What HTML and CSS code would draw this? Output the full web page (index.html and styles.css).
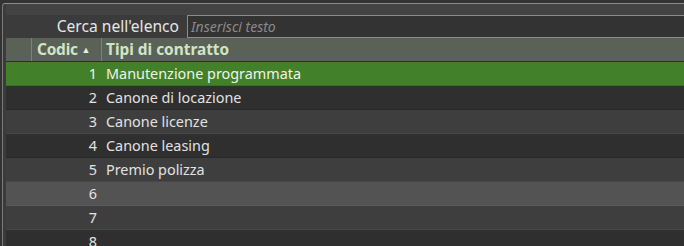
FILE: index.html
```html
<!DOCTYPE html>
<html lang="it">

<head>
  <meta charset="UTF-8" />
  <title>Tipi di contratto</title>
  <link rel="stylesheet" href="styles.css">
</head>

<body>

  <div class="panel">
    <div class="top-band"></div>

    <div class="search-row">
      <label class="search-label" for="search">Cerca nell'elenco</label>
      <input class="search-input" id="search" type="text" placeholder="Inserisci testo" />
    </div>

    <div class="grid">
      <div class="grid-row head">
        <div class="cell rowhead"></div>
        <div class="cell code">Codic <span class="sort">&#9650;</span></div>
        <div class="cell name">Tipi di contratto</div>
      </div>
      <div class="grid-row selected">
        <div class="cell rowhead"></div>
        <div class="cell code">1</div>
        <div class="cell name">Manutenzione programmata</div>
      </div>
      <div class="grid-row even">
        <div class="cell rowhead"></div>
        <div class="cell code">2</div>
        <div class="cell name">Canone di locazione</div>
      </div>
      <div class="grid-row odd">
        <div class="cell rowhead"></div>
        <div class="cell code">3</div>
        <div class="cell name">Canone licenze</div>
      </div>
      <div class="grid-row even">
        <div class="cell rowhead"></div>
        <div class="cell code">4</div>
        <div class="cell name">Canone leasing</div>
      </div>
      <div class="grid-row odd">
        <div class="cell rowhead"></div>
        <div class="cell code">5</div>
        <div class="cell name">Premio polizza</div>
      </div>
      <div class="grid-row hover">
        <div class="cell rowhead"></div>
        <div class="cell code">6</div>
        <div class="cell name"></div>
      </div>
      <div class="grid-row odd">
        <div class="cell rowhead"></div>
        <div class="cell code">7</div>
        <div class="cell name"></div>
      </div>
      <div class="grid-row even">
        <div class="cell rowhead"></div>
        <div class="cell code">8</div>
        <div class="cell name"></div>
      </div>
    </div>
  </div>

</body>

</html>
```

FILE: styles.css
```css
html,
body {
  margin: 0;
  height: 100%;
  overflow: hidden;
}

body {
  font-family: 'Noto Sans', 'Open Sans', sans-serif;
  font-size: 14.4px;
  background: #333333;
  color: #e2e2e2;
  padding: 3px 0 0 2px;
  box-sizing: border-box;
}

.panel {
  background: #3b3b3b;
  border-top: 1px solid #8c8c8c;
  border-left: 1px solid #7a7a7a;
  border-top-left-radius: 3px;
  padding-left: 3px;
  height: 100%;
}

.top-band {
  height: 11px;
  background: #434343;
}

/* ricerca */
.search-row {
  display: flex;
  align-items: stretch;
  height: 23px;
}

.search-label {
  width: 181px;
  padding-right: 8px;
  box-sizing: border-box;
  text-align: right;
  line-height: 22px;
  color: #e6e6e6;
  font-size: 15.6px;
}

.search-input {
  flex: 1;
  margin: 0 -6px 0 0;
  border: 1px solid #8c8c8c;
  border-right: none;
  background: #333333;
  color: #ddd;
  font-family: inherit;
  font-size: 14px;
  padding: 0 3px;
  outline: none;
}

.search-input::placeholder {
  color: #8a8a8a;
  font-style: italic;
}

/* griglia */
.grid {
  display: flex;
  flex-direction: column;
}

.grid-row {
  display: grid;
  grid-template-columns: 26px 70px 1fr;
  height: 24px;
  box-sizing: border-box;
  border-bottom: 1px solid rgba(0, 0, 0, 0.12);
}

.cell {
  line-height: 24px;
  white-space: nowrap;
  overflow: hidden;
}

.cell.code {
  text-align: right;
  padding-right: 5px;
}

.cell.name {
  padding-left: 4px;
}

.grid-row.head {
  background: #5a6257;
  color: #d3e4c5;
  font-weight: bold;
  font-size: 15.4px;
  border-bottom: 1px solid #2d2d2d;
}

.grid-row.head .cell {
  line-height: 23px;
  border-right: 1px solid #7a8376;
}

.grid-row.head .cell.name {
  border-right: none;
}

.grid-row.head .cell.code {
  text-align: left;
  padding-left: 5px;
  letter-spacing: -0.2px;
}

.sort {
  font-size: 9px;
  vertical-align: 2px;
  color: #e8eee3;
}

.grid-row.selected {
  background: #43802a;
  color: #eef4e8;
  border-bottom-color: #3a6f25;
}

.grid-row.even {
  background: #2f2f2f;
}

.grid-row.odd {
  background: #3e3e3e;
  border-bottom-color: #474747;
}

.grid-row.hover {
  background: #535353;
  border-bottom-color: #5a5a5a;
}
```
